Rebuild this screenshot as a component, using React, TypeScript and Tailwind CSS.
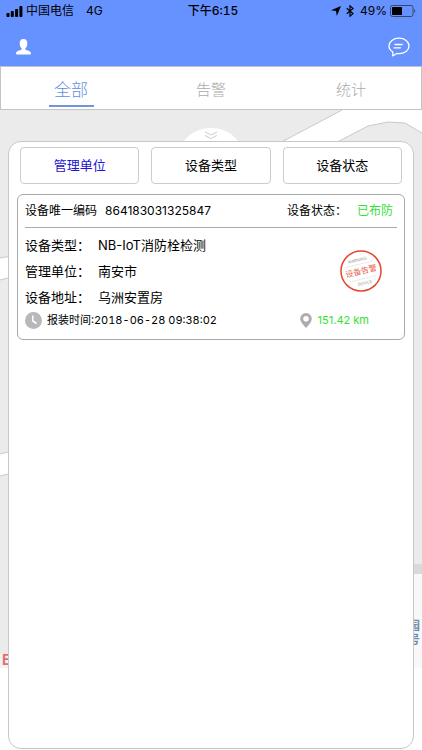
import { useState } from "react";

const TABS = ["全部", "告警", "统计"];
const FILTERS = ["管理单位", "设备类型", "设备状态"];

const device = {
  code: "864183031325847",
  status: "已布防",
  rows: [
    { label: "设备类型：", value: "NB-IoT消防栓检测" },
    { label: "管理单位：", value: "南安市" },
    { label: "设备地址：", value: "乌洲安置房" },
  ],
  installedAt: "2018-06-28 09:38:02",
  distance: "151.42 km",
};

function StatusBar() {
  return (
    <div className="grid h-[22px] grid-cols-3 items-center px-[6px] text-xs text-black">
      <div className="flex items-center">
        <svg width="17" height="11" viewBox="0 0 17 11" aria-hidden="true">
          <rect x="0.5" y="7" width="3" height="4" rx="0.8" />
          <rect x="4.8" y="5" width="3" height="6" rx="0.8" />
          <rect x="9.1" y="3" width="3" height="8" rx="0.8" />
          <rect x="13.4" y="0" width="3" height="11" rx="0.8" />
        </svg>
        <span className="ml-[3px]">中国电信</span>
        <span className="ml-3">4G</span>
      </div>
      <div className="pl-1 text-center font-medium tabular-nums">下午6:15</div>
      <div className="flex items-center justify-end">
        <svg width="10" height="10" viewBox="0 0 10 10" aria-hidden="true">
          <path d="M10 0 5.8 10 5 5.1 0 4.3z" />
        </svg>
        <svg className="ml-[5px]" width="8" height="12" viewBox="0 0 8 12" fill="none" stroke="black" strokeWidth="1.2" aria-hidden="true">
          <path d="M0.7 3.2 7 8.6 4 11.2V0.8L7 3.4 0.7 8.8" />
        </svg>
        <span className="ml-[6px]">49%</span>
        <svg className="ml-[3px]" width="26" height="12" viewBox="0 0 26 12" aria-hidden="true">
          <rect x="0.5" y="0.5" width="22.5" height="11" rx="2" fill="none" stroke="#35466f" />
          <rect x="2" y="2" width="10" height="8" rx="0.6" />
          <path d="M24.3 4v4c1.3-.4 1.3-3.6 0-4z" fill="#35466f" />
        </svg>
      </div>
    </div>
  );
}

function MapBackground() {
  return (
    <svg className="absolute inset-x-0 top-0 w-full" viewBox="0 0 422 640" aria-hidden="true">
      <rect width="422" height="558" fill="#ebebeb" />
      {/* roads */}
      <path d="M276 35 342 0H422V23L405 13 388 12 368 16 322 40z" fill="#fff" />
      <path d="M276 35 342 0M322 40 368 16 388 12 405 13 422 23" fill="none" stroke="#c9c9c9" />
      <path d="M0 148 12 146V167L0 170z" fill="#fff" />
      <path d="M0 148 12 146M0 170 12 167" fill="none" stroke="#c9c9c9" />
      <path d="M0 344 12 341V363L0 366z" fill="#fff" />
      <path d="M0 344 12 341M0 366 12 363" fill="none" stroke="#c9c9c9" />
      <rect x="410" y="454" width="12" height="10" fill="#d9d9d9" />
      <rect x="410" y="464" width="12" height="94" fill="#f8f8f8" />
      <rect y="544" width="12" height="14" fill="#f2f2f2" />
      <text x="2" y="555" fontSize="14" fontWeight="700" fill="#e46f70">E</text>
      <text x="408" y="520" fontSize="12" fontWeight="700" fill="#6f8fb0">园</text>
      <text x="408" y="534" fontSize="12" fontWeight="700" fill="#6f8fb0">号</text>
    </svg>
  );
}

function AlarmStamp() {
  return (
    <svg width="44" height="44" viewBox="0 0 44 44" role="img" aria-label="设备告警">
      <circle cx="22" cy="22" r="20" fill="#fff" stroke="#e2472f" strokeWidth="1.5" />
      <g transform="rotate(-14 22 22)" textAnchor="middle">
        <text x="21" y="12" fontSize="4" fill="#999">WARNING</text>
        <path d="M8 15H36M8 30H36" stroke="#e3e3e3" strokeWidth="0.7" />
        <text x="22" y="25" fontSize="8" fill="#e6604c">设备告警</text>
        <text x="23" y="36" fontSize="4" fill="#999">DEVICE</text>
      </g>
    </svg>
  );
}

function DeviceCard() {
  return (
    <article className="mx-2 mt-[10px] rounded-md border border-[#a9a9a9] px-[7px] text-black">
      <div className="flex h-[33px] items-center border-b border-[#aaa] text-xs">
        <span>设备唯一编码</span>
        <span className="ml-2">{device.code}</span>
        <span className="ml-auto">设备状态：</span>
        <span className="mr-1 ml-[10px] text-[#34e234]">{device.status}</span>
      </div>
      <div className="flex items-center justify-between pt-1">
        <dl className="text-[13px] leading-[26px]">
          {device.rows.map((row) => (
            <div key={row.label} className="flex">
              <dt className="w-[73px]">{row.label}</dt>
              <dd>{row.value}</dd>
            </div>
          ))}
        </dl>
        <div className="mr-[14px]">
          <AlarmStamp />
        </div>
      </div>
      <div className="mb-[9px] flex h-5 items-center text-[11px]">
        <svg width="17" height="17" viewBox="0 0 17 17" aria-hidden="true">
          <circle cx="8.5" cy="8.5" r="8.5" fill="#b8b8bb" />
          <path d="M7.8 3.5V9l3.8 2.5" fill="none" stroke="#fff" strokeWidth="1.5" />
        </svg>
        <span className="ml-[5px] tabular-nums">报装时间:{device.installedAt}</span>
        <svg className="ml-auto" width="12" height="15" viewBox="0 0 12 15" aria-hidden="true">
          <path
            d="M6 0a5.8 5.8 0 0 0-5.8 5.8C.2 9.5 6 15 6 15s5.8-5.5 5.8-9.2A5.8 5.8 0 0 0 6 0zm0 3a2.8 2.8 0 1 1 0 5.6A2.8 2.8 0 0 1 6 3z"
            fill="#acacac"
          />
        </svg>
        <span className="mr-7 ml-[6px] text-[#34e234]">{device.distance}</span>
      </div>
    </article>
  );
}

export default function App() {
  const [tab, setTab] = useState("全部");
  const [filter, setFilter] = useState("管理单位");

  return (
    <div className="flex min-h-screen flex-col bg-white font-['Inter','Noto_Sans_CJK_SC',sans-serif]">
      <header className="bg-[#6692ff]">
        <StatusBar />
        <div className="flex h-11 items-center justify-between pt-[6px] pr-3 pl-4">
          <button aria-label="我的">
            <svg width="15" height="16" viewBox="0 0 15 16" fill="#fff" aria-hidden="true">
              <path d="M7.5 0C4.8 0 3.5 2 3.7 4.7c.1 2 .8 3.7 2 4.7v1.1C4.5 11.5 0 11.6 0 14.6c0 .6.4.9 1 .9h13c.6 0 1-.3 1-.9 0-3-4.5-3.1-5.7-4.1V9.4c1.2-1 1.9-2.7 2-4.7C11.5 2 10.2 0 7.5 0z" />
            </svg>
          </button>
          <button aria-label="消息">
            <svg width="22" height="20" viewBox="0 0 22 20" fill="none" stroke="#fff" strokeWidth="1.3" strokeLinecap="round" strokeLinejoin="round" aria-hidden="true">
              <path d="M4.6 14.8C2.3 13.400 1 11.300 1 9 1 4.700 5.400 1.200 11 1.200S21 4.700 21 9s-4.400 7.600-10 7.600c-.8 0-1.500 0-2.200-.2-1.200 1.200-2.500 1.900-4.200 2.400.5-1.200.5-2.600 0-4z" />
              <path d="M7 7.500H14.200M6 10.800H7.500M8 10.800H12.500" />
            </svg>
          </button>
        </div>
      </header>

      <nav className="flex h-11 border border-[#c4c4c4]">
        {TABS.map((name) => (
          <button
            key={name}
            onClick={() => setTab(name)}
            className={`flex flex-1 items-end justify-center pb-[2px] ${tab === name ? "text-[17px] text-[#5f8fe0]" : "text-[15px] text-[#aaa]"}`}
          >
            <span
              className={`flex h-[36px] w-[45px] items-center justify-center border-b-2 pt-[5px] font-light ${tab === name ? "border-[#6f96dc]" : "border-transparent"}`}
            >
              {name}
            </span>
          </button>
        ))}
      </nav>

      <main className="relative flex flex-1 flex-col overflow-hidden pt-[18px] pb-px">
        <MapBackground />
        <button aria-label="收起" className="relative mx-auto block">
          <svg width="54" height="13" viewBox="0 0 54 13" aria-hidden="true">
            <path d="M0 13C13-4.3 41-4.3 54 13z" fill="#fff" />
            <path d="M21 4 27 7 33 4M21 7.5 27 10.5 33 7.5" fill="none" stroke="#ccc" />
          </svg>
        </button>
        <section className="relative mx-2 flex-1 rounded-[13px] border border-[#c8c8c8] bg-white pt-[5px]">
          <div className="grid grid-cols-3 gap-3 px-[11px]">
            {FILTERS.map((name) => (
              <button
                key={name}
                onClick={() => setFilter(name)}
                className={`h-[37px] rounded border border-[#ccc] text-[13px] ${filter === name ? "text-[#1d13d2]" : "text-black"}`}
              >
                {name}
              </button>
            ))}
          </div>
          <DeviceCard />
        </section>
      </main>
    </div>
  );
}
